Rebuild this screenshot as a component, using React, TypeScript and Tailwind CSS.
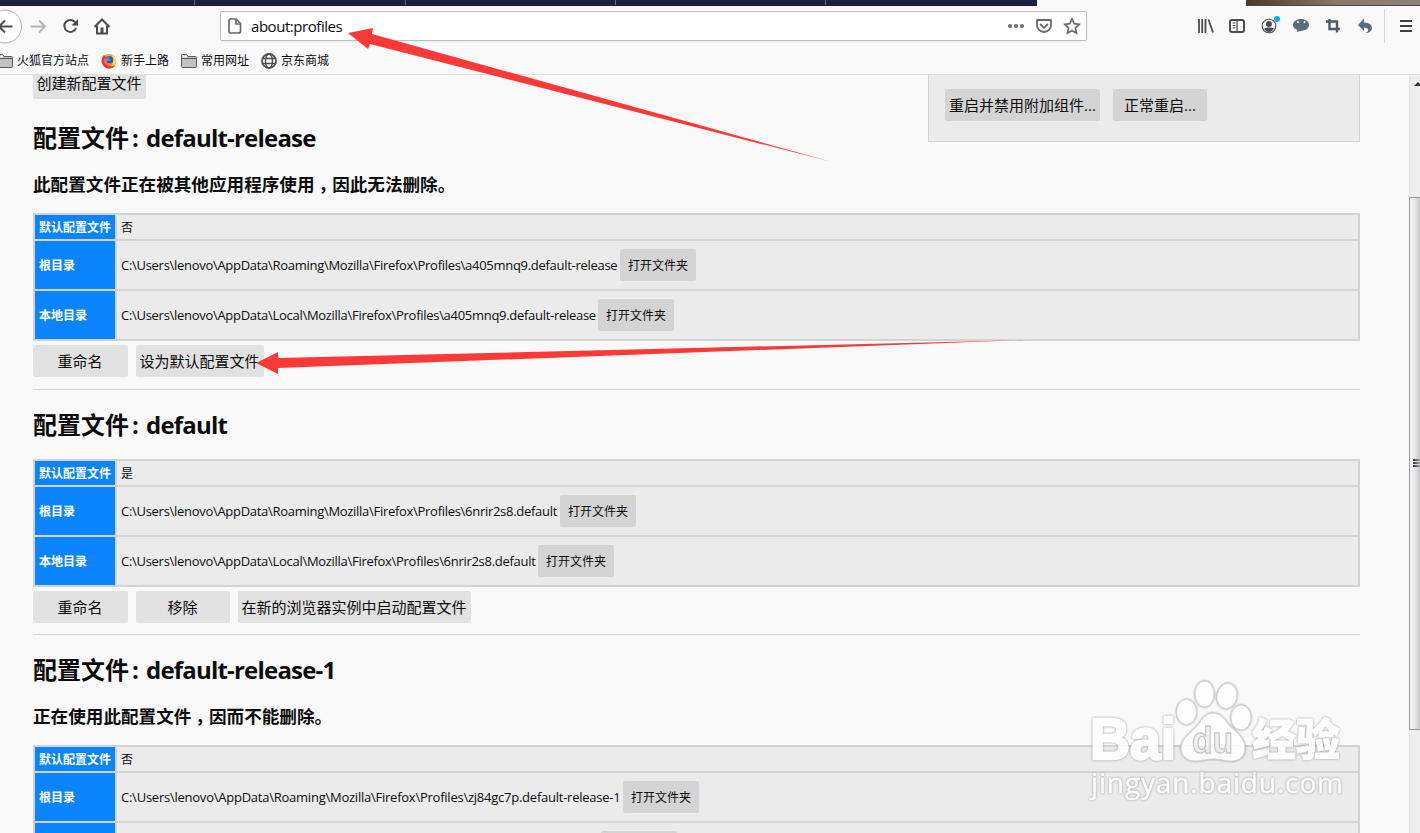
import React from 'react'

const profiles = [
  {
    name: 'default-release',
    notice: ['此配置文件正在被其他应用程序使用', '因此无法删除。'],
    isDefault: '否',
    root: 'C:\\Users\\lenovo\\AppData\\Roaming\\Mozilla\\Firefox\\Profiles\\a405mnq9.default-release',
    rootClass: 'w-[499px] tracking-[-0.29px]',
    local: 'C:\\Users\\lenovo\\AppData\\Local\\Mozilla\\Firefox\\Profiles\\a405mnq9.default-release',
    localClass: 'w-[477px] tracking-[-0.29px]',
    actions: [
      { label: '重命名', className: 'w-[95px]' },
      { label: '设为默认配置文件', className: 'w-[128px]' },
    ],
    footerClass: 'mb-3',
  },
  {
    name: 'default',
    notice: [],
    isDefault: '是',
    root: 'C:\\Users\\lenovo\\AppData\\Roaming\\Mozilla\\Firefox\\Profiles\\6nrir2s8.default',
    rootClass: 'w-[439px] tracking-[-0.29px]',
    local: 'C:\\Users\\lenovo\\AppData\\Local\\Mozilla\\Firefox\\Profiles\\6nrir2s8.default',
    localClass: 'w-[417px] tracking-[-0.29px]',
    actions: [
      { label: '重命名', className: 'w-[95px]' },
      { label: '移除', className: 'w-[94px]' },
      { label: '在新的浏览器实例中启动配置文件', className: 'w-[233px]' },
    ],
    footerClass: 'mb-[11px]',
  },
  {
    name: 'default-release-1',
    notice: ['正在使用此配置文件', '因而不能删除。'],
    isDefault: '否',
    root: 'C:\\Users\\lenovo\\AppData\\Roaming\\Mozilla\\Firefox\\Profiles\\zj84gc7p.default-release-1',
    rootClass: 'w-[502px] tracking-[-0.24px]',
    local: 'C:\\Users\\lenovo\\AppData\\Local\\Mozilla\\Firefox\\Profiles\\zj84gc7p.default-release-1',
    localClass: 'w-[480px] tracking-[-0.24px]',
    actions: [],
    footerClass: 'mb-3',
  },
]

function FolderIcon() {
  return (
    <svg width="16" height="14" viewBox="0 0 16 14" className="shrink-0">
      <path d="M.5 12.5v-11q0-1 1-1h4l1.5 2h7.500q1 0 1 1v9q0 1-1 1h-13q-1 0-1-1z" fill="#c3c3c5" stroke="#59595b" />
      <path d="M1 4.500h14" stroke="#59595b" />
      <path d="M1.500 1.500h4l1 2h-5z" fill="#eee" />
    </svg>
  )
}

function FirefoxIcon() {
  return (
    <svg width="16" height="16" viewBox="0 0 16 16" className="shrink-0">
      <circle cx="8" cy="8.300" r="7.300" fill="#ff9a1f" />
      <path d="M1.500 3.500C-.5 8 1 13 5 15c4 1.500 8 0 9.500-3-3 2-7 1.500-8.500-1-2-1-3-4-1-6.500L3 2z" fill="#f0334b" />
      <path d="M10 1c4 1.500 6 5 4.500 9-1 2-3 3.500-4.500 3.500 3-3 3-8 0-12.500z" fill="#ffe14a" />
      <circle cx="8.200" cy="7" r="4" fill="#2458c8" />
      <path d="M5 5c1-2 3-2 4-1.500L8 5.500 10 7c-1 1.500-3 1-4 .5z" fill="#18a0e8" />
      <path d="M3 6c1.500-.8 3 0 4 1l-1.500 1.500c1 2 4 2.500 6 .5-1 4-6.500 4.500-8.500 0z" fill="#ff7a24" />
    </svg>
  )
}

function GlobeIcon() {
  return (
    <svg width="16" height="16" viewBox="0 0 16 16" fill="none" stroke="#505052" className="shrink-0">
      <circle cx="8" cy="8" r="7" strokeWidth="1.800" />
      <ellipse cx="8" cy="8" rx="3.500" ry="7" strokeWidth="1.400" />
      <path d="M1.500 5.500h13M1.500 10.500h13" strokeWidth="1.400" />
    </svg>
  )
}

function TabStrip() {
  return (
    <div className="flex h-1.5 shrink-0 justify-between bg-[#f9f9fa]">
      <div className="flex w-[1037px] border-b border-[#28133a] bg-[#1f2140]">
        <div className="w-[195px] border-r border-[#6b6c82]" />
        <div className="w-[211px] border-r border-[#6b6c82]" />
        <div className="w-[210px] border-r border-[#6b6c82]" />
        <div className="w-[210px] border-r border-[#6b6c82]" />
      </div>
      <div className="w-[174px] border-b border-[#57404a] bg-linear-to-r from-[#4b382c] via-[#86776b] to-[#8f827b]" />
    </div>
  )
}

function Toolbar() {
  return (
    <div className="flex h-[41px] shrink-0 items-center">
      {/* Navigation buttons */}
      <svg width="120" height="40" viewBox="0 0 120 40" fill="none" className="shrink-0">
        <circle cx="5" cy="19.500" r="16.500" fill="#fff" stroke="#b1b1b3" />
        <path d="M12.500 19.500H0M5 13.500l-6 6 6 6" stroke="#4c4c4e" strokeWidth="2" />
        <path d="M30.500 19.500h14M39 13.500l6 6-6 6" stroke="#b4b4b6" strokeWidth="2" />
        <path d="M75.300 15.500a6 6 0 1 0 .7 5.500" stroke="#4c4c4e" strokeWidth="2" />
        <path d="M78 12v6.500h-6.500z" fill="#4c4c4e" />
        <path d="M94.500 20l7.500-7.500 7.500 7.500" stroke="#4c4c4e" strokeWidth="2" />
        <path d="M97 18.500v8h10v-8" stroke="#4c4c4e" strokeWidth="2" />
        <path d="M100.500 20.500h3v6h-3z" fill="#4c4c4e" />
      </svg>

      {/* Address bar */}
      <div className="mb-px ml-[100px] flex h-[30px] w-[867px] items-center rounded-[2px] border border-[#bdbdbe] bg-white pl-1.5 shadow-xs">
        <svg width="16" height="16" viewBox="0 0 16 16" fill="none" stroke="#69696b" strokeWidth="1.700" className="shrink-0">
          <path d="M3 1h6l4.500 4.500V13q0 2-2 2h-7.500q-2 0-2-2V3q0-2 2-2z" />
          <path d="M9 1v5h4.500" />
        </svg>
        <span className="ml-2 pt-px text-[15px] tracking-[-0.45px] text-[#0c0c0d]">about:profiles</span>
        <svg width="80" height="20" viewBox="0 0 80 20" fill="none" className="ml-auto shrink-0">
          <g fill="#69696b">
            <circle cx="4" cy="10" r="2" />
            <circle cx="10" cy="10" r="2" />
            <circle cx="16" cy="10" r="2" />
          </g>
          <path d="M31 4h14v5a7 7 0 0 1-14 0z" stroke="#69696b" strokeWidth="1.800" strokeLinejoin="round" />
          <path d="M34.500 8.500L38 11.800l3.500-3.300" stroke="#69696b" strokeWidth="1.800" strokeLinecap="round" />
          <path d="M66 3l2.200 4.700 5 .6-3.700 3.500 1 5.200-4.500-2.600-4.500 2.600 1-5.200-3.700-3.500 5-.6z" stroke="#69696b" strokeWidth="1.700" strokeLinejoin="miter" />
        </svg>
      </div>

      {/* Extension buttons */}
      <svg width="230" height="41" viewBox="0 0 230 41" fill="none" className="ml-auto shrink-0">
        <path d="M9 13v14M12.200 13v14M15.500 13v14M18.500 13.500l4.500 13" stroke="#4c4c4e" strokeWidth="1.800" />
        <rect x="40" y="14" width="14" height="12" rx="2" stroke="#4c4c4e" strokeWidth="2" />
        <path d="M47 14v12M42.500 17h3M42.500 19.500h3M42.500 22h3" stroke="#4c4c4e" strokeWidth="1.200" />
        <circle cx="79" cy="20" r="6.800" stroke="#4c4c4e" strokeWidth="1.100" />
        <circle cx="79" cy="18" r="3" fill="#4c4c4e" />
        <path d="M74 22.500q5-2 10 0-2 3.500-5 3.500t-5-3.500z" fill="#4c4c4e" />
        <circle cx="87" cy="13" r="3" fill="#00b3f4" />
        <path d="M111 13c4.500 0 8 2.500 8 6s-3.500 5.700-7 5.700L106.500 26l.8-2c-2.500-1-4.300-3-4.300-5 0-3.500 3.500-6 8-6z" fill="#5c6b7a" />
        <circle cx="108" cy="16" r="1" fill="#fff" />
        <circle cx="114.500" cy="16" r="1" fill="#fff" />
        <path d="M136 15.500h11v11M139.500 13v10h10.500" stroke="#4d5b69" strokeWidth="2.400" />
        <path d="M168 19l6-6.500v4q8 0 8 6-1 4.500-7 4.500 4-1.500 3-4-1-1.500-4-1.500v3.500z" fill="#5c6b7a" />
        <path d="M194.500 3v34" stroke="#d7d7db" />
        <path d="M210 15h12M210 20h12M210 25h12" stroke="#3f3f41" strokeWidth="2" />
      </svg>
    </div>
  )
}

function BookmarksBar() {
  return (
    <div className="flex h-7 shrink-0 items-center border-b border-[#e0e0e1] text-[12px] text-[#0c0c0d]">
      <div className="-ml-[3px] flex items-center gap-1"><FolderIcon />火狐官方站点</div>
      <div className="ml-3 flex items-center gap-1"><FirefoxIcon />新手上路</div>
      <div className="ml-3 flex items-center gap-1"><FolderIcon />常用网址</div>
      <div className="ml-3 flex items-center gap-1"><GlobeIcon />京东商城</div>
    </div>
  )
}

function PathRow({ label, path, pathClass }: { label: string; path: string; pathClass: string }) {
  return (
    <div className="flex h-12 gap-0.5">
      <div className="flex w-20 items-center bg-[#0a84ff] pt-0.5 pl-1 font-bold text-white">{label}</div>
      <div className="flex flex-1 items-center bg-[#ebebeb] pl-1 whitespace-nowrap">
        <span className={`${pathClass} shrink-0 pt-0.5 text-[13px]`}>{path}</span>
        <button className="h-8 w-[76px] rounded-[2px] bg-[#d4d4d4] pt-0.5">打开文件夹</button>
      </div>
    </div>
  )
}

function Profile({ profile }: { profile: (typeof profiles)[number] }) {
  return (
    <section>
      <h2 className="h-8 text-[24px] leading-8 font-bold">
        配置文件<span className="inline-block w-[17px] pr-1 text-center">:</span>
        <span className="tracking-[-0.8px]">{profile.name}</span>
      </h2>
      {profile.notice.length > 0 && (
        <h3 className="mt-[18px] -mb-px h-6 text-[17.6px] leading-6 font-bold">
          {profile.notice[0]}
          <span className="-mr-1 pl-1">，</span>
          {profile.notice[1]}
        </h3>
      )}
      <div className="mt-[18px] flex flex-col gap-0.5 bg-[#d3d3d3] p-0.5 text-[12px]">
        <div className="flex h-6 gap-0.5">
          <div className="flex w-20 items-center bg-[#0a84ff] pt-0.5 pl-1 font-bold text-white">默认配置文件</div>
          <div className="flex flex-1 items-center bg-[#ebebeb] pt-0.5 pl-1">{profile.isDefault}</div>
        </div>
        <PathRow label="根目录" path={profile.root} pathClass={profile.rootClass} />
        <PathRow label="本地目录" path={profile.local} pathClass={profile.localClass} />
      </div>
      <div className={`mt-1 flex h-8 gap-2 text-[15px] ${profile.footerClass}`}>
        {profile.actions.map((action) => (
          <button key={action.label} className={`${action.className} shrink-0 rounded-[2px] bg-[#e1e1e2] pr-px whitespace-nowrap`}>
            {action.label}
          </button>
        ))}
      </div>
      <hr className="mb-[19px] border-[#d7d7db]" />
    </section>
  )
}

function Scrollbar() {
  return (
    <div className="flex w-[11px] shrink-0 flex-col border-l border-[#e3e3e3] bg-[#eee]">
      <div className="flex h-[122px] items-start justify-end pt-[7px]">
        <svg width="6" height="4" viewBox="0 0 6 4"><path d="M0 4l4-4 4 4z" fill="#333" /></svg>
      </div>
      <div className="-ml-px flex h-[533px] items-center rounded-l-[2px] border-y border-l border-[#98989a] bg-linear-to-r from-[#f6f6f6] via-[#e5e5e6] to-[#c5c5c9]">
        <div className="mb-0.5 ml-[3px] flex w-2 flex-col gap-px">
          <div className="h-0.5 bg-linear-to-r from-[#333] to-[#aaa]" />
          <div className="h-0.5 bg-linear-to-r from-[#333] to-[#aaa]" />
          <div className="h-0.5 bg-linear-to-r from-[#333] to-[#aaa]" />
        </div>
      </div>
    </div>
  )
}

function Watermark() {
  return (
    <svg width="270" height="140" viewBox="0 0 270 140" strokeLinejoin="round" className="absolute top-[672px] left-[1080px] opacity-85 drop-shadow-[0_0_1px_#888]">
      <g fill="#fff" stroke="#cfcfcf" strokeWidth="1">
        <ellipse cx="106.500" cy="40" rx="10" ry="12.500" />
        <ellipse cx="124.500" cy="22" rx="9.500" ry="13" />
        <ellipse cx="147" cy="24" rx="10" ry="12.500" transform="rotate(12 147 24)" />
        <ellipse cx="161" cy="45.500" rx="10" ry="12.500" />
        <path d="M133 41c9 0 13 9 19 15 9 8 13 13 13 20 0 9-6 13-14 13-7 0-11-2-18-2s-11 2-18 2c-8 0-14-5-14-13 0-8 7-13 14-20 6-6 9-15 18-15z" />
      </g>
      <text x="10" y="87" fontSize="57" textLength="86" lengthAdjust="spacingAndGlyphs" fill="#fff" stroke="#fff" strokeWidth="2.500" className="font-['Liberation_Sans'] font-bold">Bai</text>
      <text x="112" y="81" fontSize="36" textLength="41" lengthAdjust="spacingAndGlyphs" fill="#f0f0f0" stroke="#c0c0c0" strokeWidth="1.300" className="font-['Liberation_Sans'] font-bold">du</text>
      <text x="172" y="84" fontSize="44" textLength="88" lengthAdjust="spacingAndGlyphs" fill="#fff" stroke="#fff" className="font-['Noto_Sans_CJK_SC'] font-black">经验</text>
      <text x="11" y="121" fontSize="28" textLength="252" lengthAdjust="spacing" fill="#fff" stroke="#fff" strokeWidth=".5" className="font-['Open_Sans']">jingyan.baidu.com</text>
    </svg>
  )
}

export default function App() {
  return (
    <div className="relative flex h-[833px] w-[1420px] flex-col overflow-hidden bg-[#f9f9fa] font-['Open_Sans','Noto_Sans_CJK_SC',sans-serif] text-[#0c0c0d]">
      <TabStrip />
      <Toolbar />
      <BookmarksBar />

      <div className="flex min-h-0 flex-1">
        <main className="h-full min-w-0 flex-1 overflow-hidden pr-[49px] pl-[33px]">
          <div className="flex h-[47px] items-start justify-between text-[15px]">
            <div className="flex h-6 items-end overflow-hidden">
              <button className="h-8 w-[113px] shrink-0 rounded-[2px] bg-[#e1e1e2] pr-px whitespace-nowrap">创建新配置文件</button>
            </div>
            <div className="flex h-[67px] w-[432px] shrink-0 gap-[13px] border-x border-b border-[#d3d3d3] bg-[#ebebeb] pt-3.5 pl-4">
              <button className="h-8 w-[155px] rounded-[2px] bg-[#d4d4d4] whitespace-nowrap">重启并禁用附加组件...</button>
              <button className="h-8 w-[94px] rounded-[2px] bg-[#d4d4d4] whitespace-nowrap">正常重启...</button>
            </div>
          </div>
          {profiles.map((profile) => (
            <Profile key={profile.name} profile={profile} />
          ))}
        </main>
        <Scrollbar />
      </div>

      <Watermark />

      {/* Red pointer arrows */}
      <svg width="1420" height="833" viewBox="0 0 1420 833" fill="#fb3a38" className="pointer-events-none absolute inset-0">
        <path d="M348 33l25-5-1 6 460 128-462-118-2 5z" />
        <path d="M256 363l22-11v6l750-18-750 28v6z" />
      </svg>
    </div>
  )
}
